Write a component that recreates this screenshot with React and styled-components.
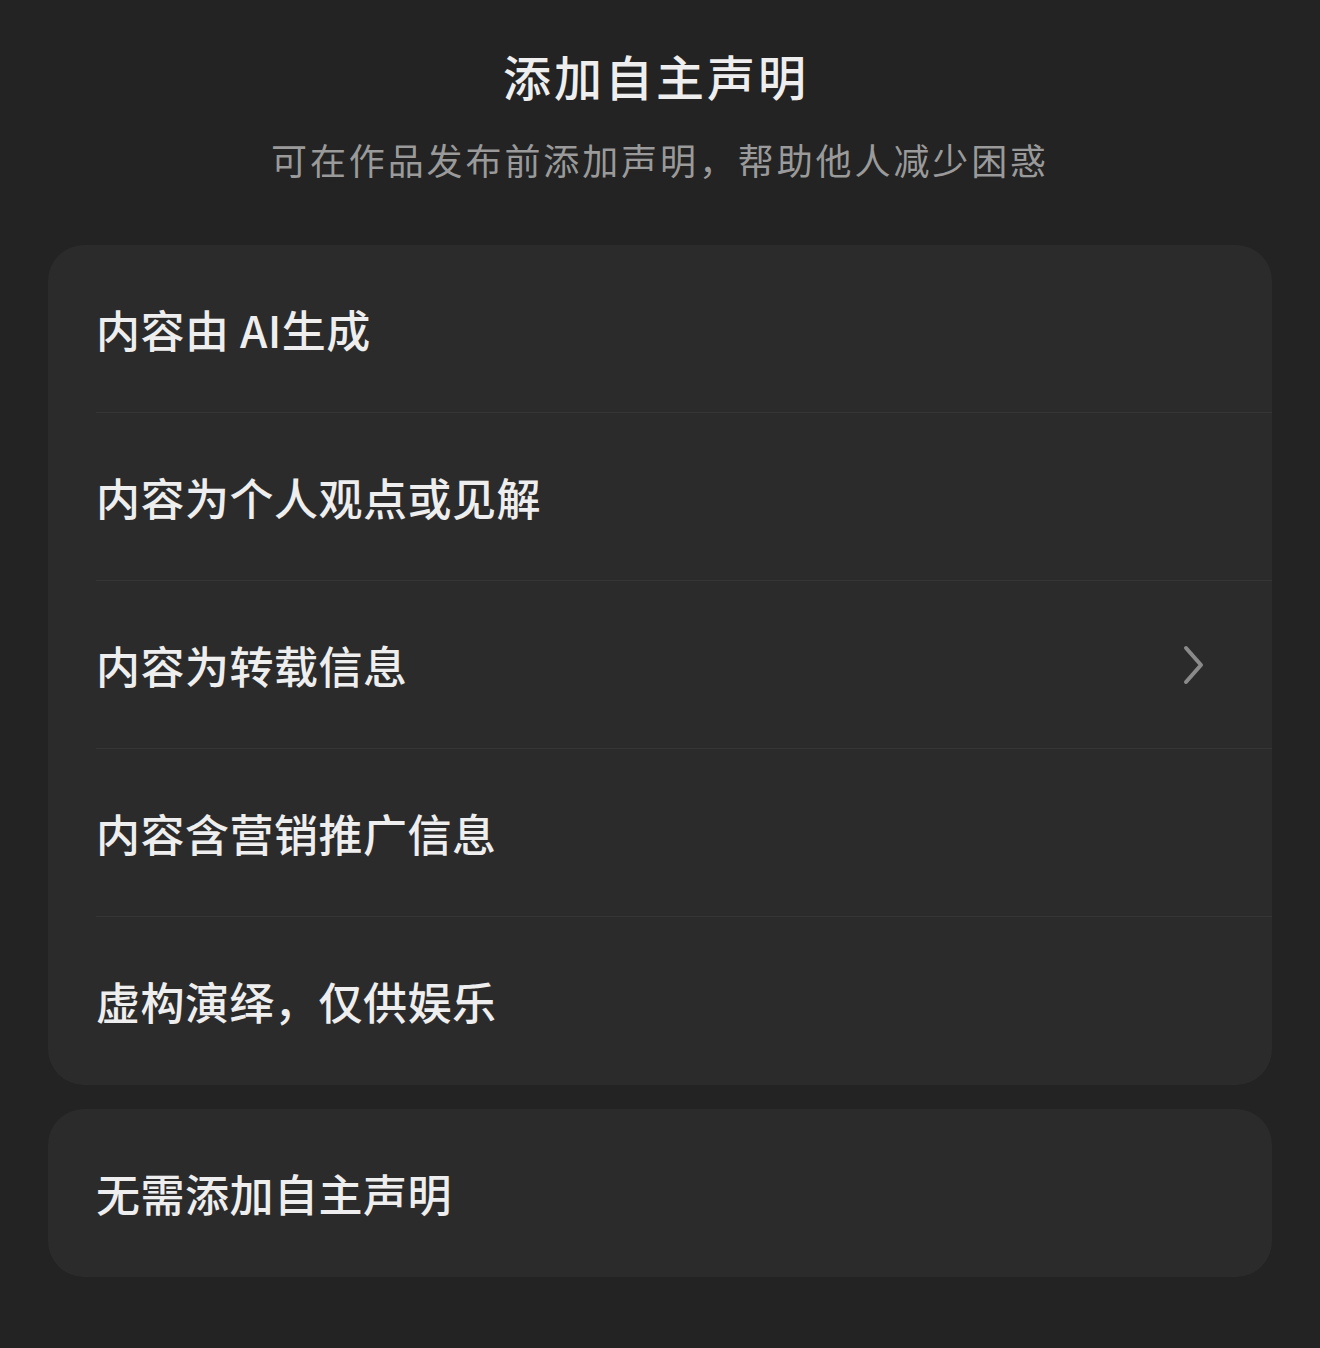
import React from "react";
import styled, { createGlobalStyle } from "styled-components";

const Global = createGlobalStyle`
  html, body { margin: 0; padding: 0; background: #232323; }
  body { font-family: "Noto Sans CJK SC", "Noto Sans", sans-serif; }
  * { box-sizing: border-box; }
`;

const Page = styled.div`
  width: 1320px;
  min-height: 1348px;
  background: #232323;
  padding: 45px 48px 0;
  display: flex;
  flex-direction: column;
`;

const Header = styled.header`
  display: flex;
  flex-direction: column;
  align-items: center;
  gap: 30px;
  margin-bottom: 62px;
`;

const Title = styled.h1`
  margin: 0;
  font-size: 48px;
  line-height: 60px;
  font-weight: 500;
  color: #eeeeee;
  letter-spacing: 3px;
  padding-right: 8px;
`;

const Subtitle = styled.p`
  margin: 0;
  font-size: 36px;
  line-height: 48px;
  font-weight: 400;
  color: #9a9a9a;
  letter-spacing: 2.9px;
`;

const Card = styled.section`
  background: #2b2b2b;
  border-radius: 36px;
  overflow: hidden;
  display: flex;
  flex-direction: column;
  & + & { margin-top: 24px; }
`;

const Row = styled.div`
  height: 168px;
  margin-left: 48px;
  padding-right: 64px;
  display: flex;
  align-items: center;
  justify-content: space-between;
  border-bottom: ${(p) => (p.$last ? "none" : "1.5px solid #363636")};
`;

const Label = styled.span`
  font-size: 44px;
  line-height: 56px;
  font-weight: 500;
  color: #eeeeee;
  letter-spacing: 0.5px;
`;

const Chevron = () => (
  <svg width="28" height="44" viewBox="0 0 28 44" fill="none">
    <path d="M6 5 L21 22 L6 39" stroke="#8a8a8a" strokeWidth="4" strokeLinecap="round" strokeLinejoin="round" />
  </svg>
);

const items = [
  { text: "内容由 AI生成" },
  { text: "内容为个人观点或见解" },
  { text: "内容为转载信息", arrow: true },
  { text: "内容含营销推广信息" },
  { text: "虚构演绎，仅供娱乐" },
];

export default function App() {
  return (
    <>
      <Global />
      <Page>
        <Header>
          <Title>添加自主声明</Title>
          <Subtitle>可在作品发布前添加声明，帮助他人减少困惑</Subtitle>
        </Header>
        <Card>
          {items.map((it, i) => (
            <Row key={i} $last={i === items.length - 1}>
              <Label>{it.text}</Label>
              {it.arrow && <Chevron />}
            </Row>
          ))}
        </Card>
        <Card>
          <Row $last>
            <Label>无需添加自主声明</Label>
          </Row>
        </Card>
      </Page>
    </>
  );
}
